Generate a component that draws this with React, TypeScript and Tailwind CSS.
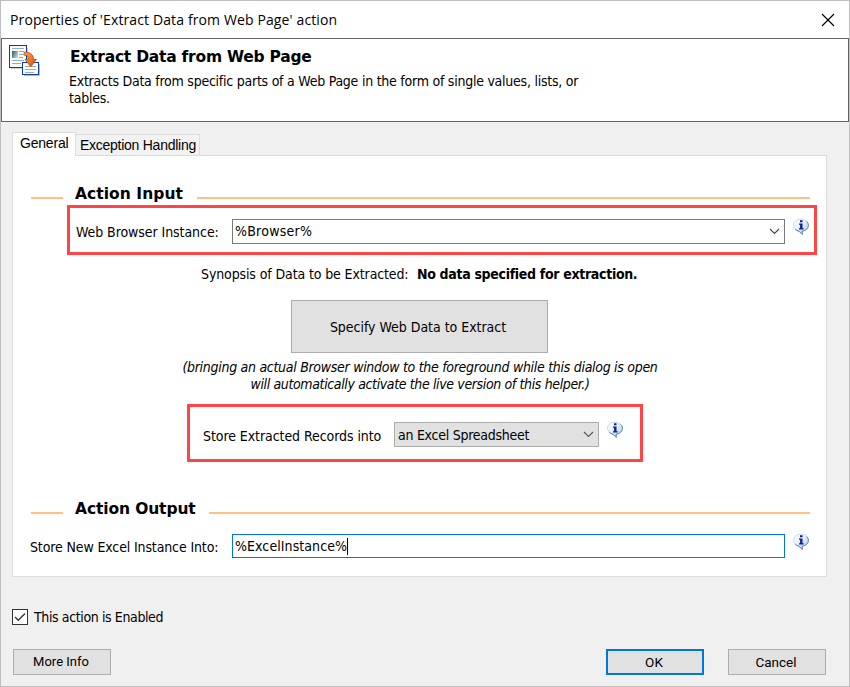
import type { ReactNode } from "react";

function InfoIcon({ className = "" }: { className?: string }) {
  return (
    <svg width="18" height="18" viewBox="0 0 18 18" className={`shrink-0 ${className}`}>
      <defs>
        <linearGradient id="bubble" x1="0" y1="0" x2="1" y2="1">
          <stop offset="0" stopColor="#ffffff" />
          <stop offset="0.5" stopColor="#e2effb" />
          <stop offset="1" stopColor="#9cc2ea" />
        </linearGradient>
      </defs>
      <path
        d="M8.900 1.100C4.700 1.100 1.500 3.800 1.500 7.300c0 3 2.200 5.200 5.500 5.900l3.200 3.200V13.200c3.700-.5 6.200-2.900 6.200-5.900 0-3.500-3.300-6.200-7.500-6.200z"
        fill="url(#bubble)"
        stroke="#c3d5e8"
        strokeWidth="0.900"
      />
      <path
        d="M14.500 3.500c1.300 1.100 1.900 2.400 1.900 3.800 0 3-2.500 5.400-6.200 5.900v3.200L7 13.200c-1.500-.3-2.800-1-3.700-1.900"
        fill="none"
        stroke="#5c7f9f"
        strokeWidth="1"
      />
      <path d="M8 2.300h2.500v2H8zM7 5.500h3.500v4.700h1.100v1.300H7v-1.300h1.100V6.800H7z" fill="#0b1f8f" />
    </svg>
  );
}

function Chevron({ color }: { color: string }) {
  return (
    <svg width="11" height="7" viewBox="0 0 11 7" className="shrink-0">
      <path d="M1 1l4.500 4.500L10 1" fill="none" stroke={color} strokeWidth="1.100" />
    </svg>
  );
}

function PageIcon() {
  return (
    <svg width="34" height="34" viewBox="0 0 34 34" className="shrink-0">
      <defs>
        <linearGradient id="arrow" x1="0" y1="0" x2="1" y2="1">
          <stop offset="0" stopColor="#f9a15c" />
          <stop offset="0.5" stopColor="#ee7c2c" />
          <stop offset="1" stopColor="#b8480c" />
        </linearGradient>
        <linearGradient id="photo" x1="0" y1="0" x2="1" y2="0.600">
          <stop offset="0" stopColor="#1d5f55" />
          <stop offset="1" stopColor="#b9d3e6" />
        </linearGradient>
      </defs>
      <path d="M3 24.500h16.500V4" fill="none" stroke="#cfcfd4" strokeWidth="1" />
      <rect x="1.500" y="1.500" width="17" height="22" fill="#fbfaf0" stroke="#0f3e9e" />
      <rect x="4" y="7" width="6" height="7" fill="url(#photo)" />
      <path d="M4 4.500h12M11 7.500h5M11 10.500h5M11 13.500h4M4 16.500h12M4 19.500h9" stroke="#93aec2" />
      <path d="M16 31.500h15.500V20" fill="none" stroke="#b8b8be" strokeWidth="1" />
      <rect x="14.500" y="18.500" width="16" height="12" fill="#fbfaf0" stroke="#0f3e9e" />
      <path d="M17 22.500h11M17 25.500h11M17 28.500h9" stroke="#93aec2" />
      <path
        d="M16.200 8.200c5-.7 9.500 1.900 9.500 7.300h2.800L22.700 22.700 17 15.500h3.400c.2-3-1.400-4.500-4.200-4.300z"
        fill="url(#arrow)"
        stroke="#a34a16"
        strokeWidth="0.700"
      />
    </svg>
  );
}

function SectionTitle({ children, className }: { children: ReactNode; className: string }) {
  return (
    <div className="flex h-5 items-start">
      <div className="mt-[13px] h-[2px] w-8 bg-[#ffc080]" />
      <h2
        className={`ml-3 shrink-0 font-['DejaVu_Sans',sans-serif] text-[15.5px] leading-5 font-bold whitespace-nowrap ${className}`}
      >
        {children}
      </h2>
      <div className="mt-[13px] h-[2px] flex-1 bg-[#ffc080]" />
    </div>
  );
}

function PushButton({ children, className = "" }: { children: ReactNode; className?: string }) {
  return (
    <button
      type="button"
      className={`flex h-[26px] w-[98px] items-center justify-center bg-[#e1e1e1] pr-[2px] font-[Roboto,sans-serif] leading-4 ${className}`}
    >
      {children}
    </button>
  );
}

export default function App() {
  return (
    <div className="flex h-[687px] w-[850px] flex-col overflow-hidden border border-[#bfbfbf] bg-[#f0f0f0] font-['DejaVu_Sans_Condensed','DejaVu_Sans',sans-serif] text-[14px] leading-[17px] text-black">
      <div className="flex h-[37px] shrink-0 items-center justify-between bg-white pr-[14px] pl-[9px]">
        <span className="font-['Open_Sans',sans-serif] tracking-[0.120px] whitespace-nowrap">
          Properties of 'Extract Data from Web Page' action
        </span>
        <svg width="14" height="14" viewBox="0 0 14 14">
          <path d="M1 1l12 12M13 1L1 13" stroke="#000" strokeWidth="1.200" />
        </svg>
      </div>

      <header className="flex h-[84px] shrink-0 border border-[#666] bg-white pt-[5px] pl-[6px]">
        <PageIcon />
        <div className="ml-[27px]">
          <h1 className="mt-[3px] ml-px font-['DejaVu_Sans',sans-serif] text-[15.5px] leading-5 font-bold tracking-[-0.240px] whitespace-nowrap">
            Extract Data from Web Page
          </h1>
          <p className="mt-[6px] tracking-[-0.245px] whitespace-nowrap">
            Extracts Data from specific parts of a Web Page in the form of single values, lists, or
            <br />
            tables.
          </p>
        </div>
      </header>

      <div className="mt-[10px] flex h-[23px] shrink-0 items-end pl-[11px] font-['Liberation_Sans',Arial,sans-serif] text-[14px]">
        <div className="z-10 -mb-px h-[24px] w-[64px] border border-b-0 border-[#dcdcdc] bg-white pt-[2px] pl-[7px] tracking-[-0.200px]">
          General
        </div>
        <div className="h-[21px] w-[124px] border border-b-0 border-l-0 border-[#dcdcdc] bg-[#f2f2f2] pt-[2px] pl-1 tracking-[-0.260px] whitespace-nowrap">
          Exception Handling
        </div>
      </div>

      <main className="ml-[11px] flex h-[422px] w-[815px] shrink-0 flex-col border border-[#dcdcdc] bg-white pt-7 pr-4 pl-[18px]">
        <SectionTitle className="w-[122px] tracking-[0.050px]">Action Input</SectionTitle>

        <div className="mt-px -mr-[7px] ml-9 flex h-[50px] border-[3px] border-[#ff4545] pt-[11px] pl-[6px]">
          <label className="mt-[5px] w-[156px] tracking-[-0.070px] whitespace-nowrap">Web Browser Instance:</label>
          <div className="flex h-[25px] w-[553px] items-center justify-between border border-[#7a7a7a] pr-[4px] pb-px pl-[2px]">
            <span className="tracking-[0.250px]">%Browser%</span>
            <Chevron color="#444" />
          </div>
          <InfoIcon className="-mt-px ml-[7px]" />
        </div>

        <div className="mt-[11px] ml-[170px] flex whitespace-nowrap">
          <span className="w-[216px] tracking-[-0.120px]">Synopsis of Data to be Extracted:</span>
          <span className="font-bold tracking-[-0.320px]">No data specified for extraction.</span>
        </div>

        <button
          type="button"
          className="mt-[17px] ml-[260px] h-[53px] w-[257px] shrink-0 border border-[#adadad] bg-[#e1e1e1] pt-[2px] pr-[3px] tracking-[-0.030px]"
        >
          Specify Web Data to Extract
        </button>

        <div className="mt-[6px] ml-[151px] w-[476px] text-center whitespace-nowrap italic">
          <p className="tracking-[-0.290px]">(bringing an actual Browser window to the foreground while this dialog is open</p>
          <p className="tracking-[-0.370px]">will automatically activate the live version of this helper.)</p>
        </div>

        <div className="mt-[11px] ml-[156px] flex h-[58px] w-[456px] shrink-0 border-[3px] border-[#ff4545] pt-[15px] pl-[13px]">
          <label className="mt-[6px] w-[191px] tracking-[-0.070px] whitespace-nowrap">Store Extracted Records into</label>
          <div className="flex h-[25px] w-[205px] items-center justify-between border border-[#adadad] bg-[#e1e1e1] pr-[4px] pl-[3px]">
            <span className="mt-[2px] tracking-[-0.260px] whitespace-nowrap">an Excel Spreadsheet</span>
            <Chevron color="#555" />
          </div>
          <InfoIcon className="-mt-px ml-[7px]" />
        </div>

        <div className="h-[37px] shrink-0" />
        <SectionTitle className="w-[134px] tracking-[-0.120px]">Action Output</SectionTitle>

        <div className="mt-[15px] -mr-2 -ml-px flex">
          <label className="mt-[5px] w-[202px] tracking-[-0.130px] whitespace-nowrap">Store New Excel Instance Into:</label>
          <div className="flex h-[24px] w-[553px] items-center border border-[#0078d7] pl-[2px]">
            <span className="tracking-[0.080px]">%ExcelInstance%</span>
            <span className="h-[17px] w-px bg-black" />
          </div>
          <InfoIcon className="-mt-px ml-[7px]" />
        </div>
      </main>

      <label className="mt-8 ml-[11px] flex h-4 shrink-0 items-center">
        <span className="flex size-4 items-center justify-center border border-[#333] bg-white">
          <svg width="12" height="10" viewBox="0 0 12 10">
            <path d="M1 5l3.300 3.300L11 1.500" fill="none" stroke="#333" strokeWidth="1.300" />
          </svg>
        </span>
        <span className="ml-[6px] tracking-[-0.380px]">This action is Enabled</span>
      </label>

      <footer className="mt-6 flex shrink-0 pl-3">
        <PushButton className="border border-[#adadad] text-[13px]">More Info</PushButton>
        <PushButton className="ml-[495px] border-2 border-[#0078d7] text-[13.5px]">OK</PushButton>
        <PushButton className="ml-6 border border-[#adadad] text-[13.5px]">Cancel</PushButton>
      </footer>
    </div>
  );
}
